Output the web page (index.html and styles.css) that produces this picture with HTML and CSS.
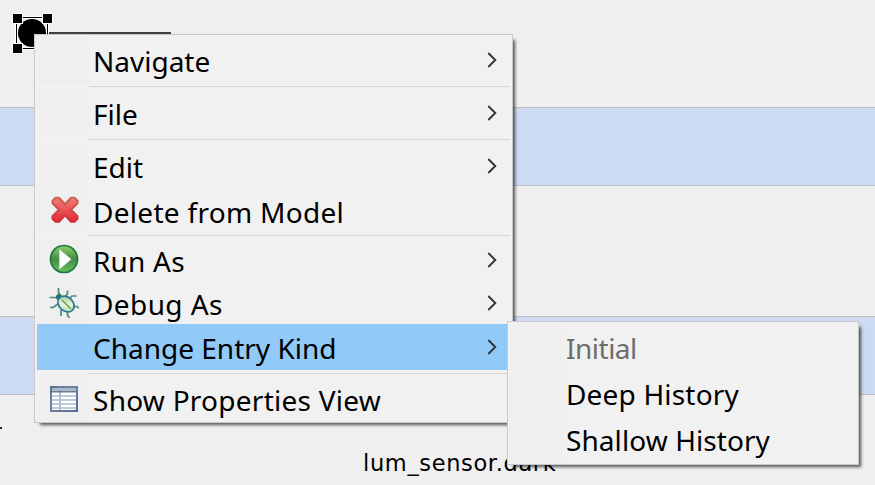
FILE: index.html
```
<!DOCTYPE html>
<html lang="en">
<head>
<meta charset="utf-8">
<title>Statechart editor</title>
<link rel="stylesheet" href="styles.css">
</head>
<body>
<svg width="0" height="0" class="defs">
  <defs>
    <symbol id="chevron" viewBox="0 0 10 16"><path d="M1.300 1l7 7-7 7" fill="none" stroke="#333" stroke-width="1.900"/></symbol>
    <linearGradient id="red" x1="0" y1="0" x2="0" y2="1"><stop offset="0" stop-color="#f18078"/><stop offset="1" stop-color="#e02835"/></linearGradient>
    <linearGradient id="redEdge" x1="0" y1="0" x2="0" y2="1"><stop offset="0" stop-color="#cd6257"/><stop offset="1" stop-color="#d42c38"/></linearGradient>
    <linearGradient id="green" x1="0" y1="0" x2="0" y2="1"><stop offset="0" stop-color="#93cd69"/><stop offset=".5" stop-color="#438e45"/><stop offset="1" stop-color="#6bbd5d"/></linearGradient>
    <linearGradient id="shell" x1="0" y1="0" x2="1" y2="1"><stop offset="0" stop-color="#8fc178"/><stop offset=".5" stop-color="#e5f2d9"/><stop offset="1" stop-color="#b1dc9f"/></linearGradient>
    <linearGradient id="frame" x1="0" y1="0" x2="1" y2="1"><stop offset="0" stop-color="#5b6d8d"/><stop offset=".35" stop-color="#7585a0"/><stop offset="1" stop-color="#536b96"/></linearGradient>
  </defs>
</svg>
<main class="canvas">
  <div class="lane lane-top"></div>
  <div class="lane lane-blue"></div>
  <div class="lane lane-mid"></div>
  <div class="lane lane-blue"></div>

  <svg class="diagram" width="180" height="440" viewBox="0 0 180 440">
    <rect x="47" y="32" width="124" height="2" fill="#404040"/>
    <rect x="16.500" y="17.500" width="31" height="31" fill="none" stroke="#fff" stroke-width="3"/>
    <rect x="16.500" y="17.500" width="31" height="31" fill="none" stroke="#000"/>
    <circle cx="32" cy="33" r="14" fill="#000"/>
    <g stroke="#fff"><rect x="12.500" y="13.500" width="10" height="10"/><rect x="42.500" y="13.500" width="10" height="10"/><rect x="12.500" y="43.500" width="10" height="10"/></g>
    <rect x="0" y="427" width="2" height="2" fill="#1a2c38"/>
  </svg>
  <span class="signal">lum_sensor.dark</span>

  <nav class="menu main-menu">
    <div class="item"><span class="icon"></span><span class="label">Navigate</span><svg class="arrow"><use href="#chevron"/></svg></div>
    <hr>
    <div class="item"><span class="icon"></span><span class="label">File</span><svg class="arrow"><use href="#chevron"/></svg></div>
    <hr>
    <div class="item"><span class="icon"></span><span class="label">Edit</span><svg class="arrow"><use href="#chevron"/></svg></div>
    <div class="item delete"><span class="icon"><svg width="30" height="30" viewBox="0 0 30 30"><path d="M5.500 2.700h3.500l6 6.500 6-6.500h3.500l3 3v2.500l-6.500 6.500 6.500 6.500v2.500l-3 3h-3.500l-6-6.500-6 6.500H5.500l-3-3v-2.500l6.500-6.500-6.500-6.500v-2.500z" fill="url(#red)" stroke="url(#redEdge)" stroke-width="2" stroke-linejoin="round"/></svg></span><span class="label">Delete from Model</span></div>
    <hr>
    <div class="item run"><span class="icon"><svg width="30" height="30" viewBox="0 0 30 30"><circle cx="15" cy="15" r="13.500" fill="url(#green)" stroke="#1c7840" stroke-width="1.700"/><path d="M10.300 5.200l12 10-12 10.300z" fill="#fff"/></svg></span><span class="label">Run As</span><svg class="arrow"><use href="#chevron"/></svg></div>
    <div class="item debug"><span class="icon"><svg width="30" height="30" viewBox="0 0 30 30"><g fill="none" stroke="#4a8a78" stroke-width="1.700"><path d="M9.500 0v4.500l1.500 3M.500 9.500h6l3 1M18.500 2.500v3l-2.500 4M27.500 8h-4.500l-4 4M1 19.500h3l5-3.500M30 20l-2-1.500h-5M12 28v-5l1.500-3M20.500 30l-2-3v-4"/></g><circle cx="10" cy="9" r="3" fill="#2d716c"/><ellipse cx="17" cy="16" rx="9" ry="7" transform="rotate(42 17 16)" fill="url(#shell)" stroke="#2c7b99" stroke-width="1.800"/><path d="M13 12l9 9" stroke="#6f9d63" stroke-width="1.500"/></svg></span><span class="label">Debug As</span><svg class="arrow"><use href="#chevron"/></svg></div>
    <div class="item selected"><span class="icon"></span><span class="label">Change Entry Kind</span><svg class="arrow"><use href="#chevron"/></svg></div>
    <hr>
    <div class="item show"><span class="icon"><svg width="30" height="30" viewBox="0 0 30 30"><path d="M2 3h26v24H2z" fill="#fff"/><path d="M3 4h24v2H3z" fill="#a8b6ca"/><path d="M3 11h24v2H3zM3 15h24v2H3zM3 19h24v2H3zM3 23h24v2H3z" fill="#c0cadb"/><path d="M10 4h2v22h-2z" fill="#b4c0d2"/><path d="M2 7.500h26" stroke="#667997" stroke-width="2"/><rect x="2" y="3" width="26" height="24" fill="none" stroke="url(#frame)" stroke-width="2"/></svg></span><span class="label">Show Properties View</span></div>
  </nav>

  <nav class="menu sub-menu">
    <div class="item disabled"><span class="icon"></span><span class="label">Initial</span></div>
    <div class="item deep"><span class="icon"></span><span class="label">Deep History</span></div>
    <div class="item shallow"><span class="icon"></span><span class="label">Shallow History</span></div>
  </nav>
</main>
</body>
</html>
```
FILE: styles.css
```
* { box-sizing: border-box; }
body { margin: 0; background: #efefef; overflow: hidden; }
.defs { position: absolute; }
.canvas { position: relative; width: 875px; height: 485px; overflow: hidden; }
.lane-top { height: 107px; }
.lane-mid { height: 130px; }
.lane-blue { height: 79px; background: #cddbf2; border: solid #bdbfc3; border-width: 1px 0; }
.diagram { position: absolute; left: 0; top: 0; }
.signal { position: absolute; left: 363px; top: 449px; font: 22.5px/28px "DejaVu Sans", sans-serif; letter-spacing: .65px; color: #000; }
.menu {
  position: absolute;
  display: flex;
  flex-direction: column;
  border: 1px solid #c9c9c9;
  background: #f1f1f1;
  box-shadow: 4px 4px 3px -2px rgba(0, 0, 0, .65);
  font: 28px/1 "Noto Sans", "Open Sans", sans-serif;
  color: #000;
}
.main-menu { left: 34px; top: 34px; width: 479px; height: 389px; padding: 3px 2px; }
.sub-menu { left: 507px; top: 321px; width: 352px; height: 144px; padding: 3px 2px; }
.item { display: flex; align-items: center; height: 46px; flex: none; }
.icon { width: 52px; height: 100%; display: flex; align-items: center; justify-content: center; padding: 0 0 2px 2px; background: #efefef; flex: none; }
.label { margin-left: 4px; white-space: pre; flex: 1; }
.arrow { width: 10px; height: 16px; margin: 0 13px 2px 0; flex: none; }
hr { width: 421px; height: 1px; margin: 2px 0 4px 52px; border: 0; background: #d4d4d4; flex: none; }
.delete { height: 43px; letter-spacing: .3px; }
.delete .icon { padding: 0 0 4px 4px; }
.run { height: 41px; letter-spacing: .2px; }
.run .icon { padding-bottom: 4px; }
.debug { height: 43px; padding-top: 2px; letter-spacing: .4px; }
.selected { background: #91c9f7; padding-top: 1px; }
.selected .icon { background: none; }
.selected + hr { margin-top: 3px; }
.show { height: 43px; letter-spacing: .26px; }
.disabled { color: #6d6d6d; letter-spacing: -.5px; }
.deep { letter-spacing: .18px; }
.shallow { letter-spacing: .08px; }
```
